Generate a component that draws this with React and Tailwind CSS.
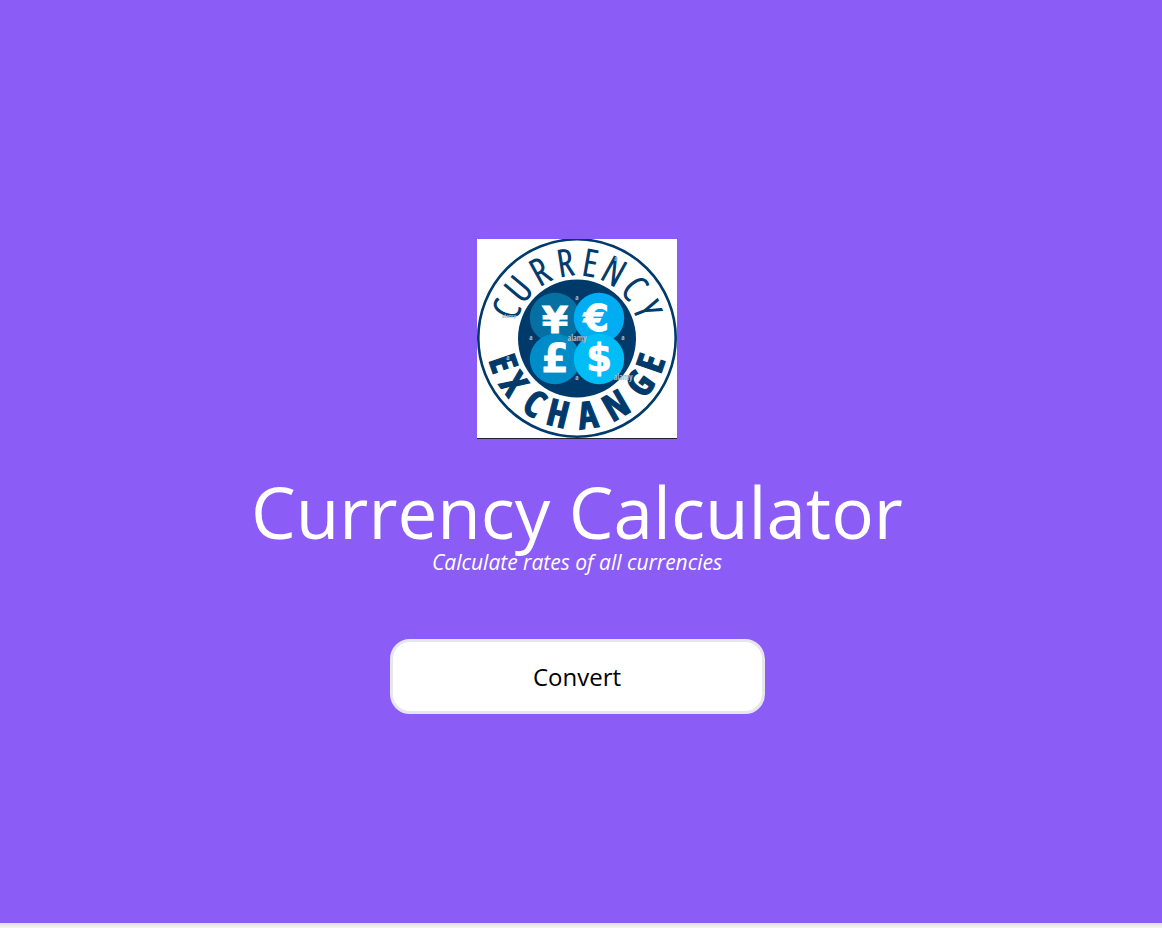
const NAVY = "#003a6b";

const topLetters = [
  ["C", -68], ["U", -50], ["R", -29], ["R", -9],
  ["E", 10], ["N", 29], ["C", 49], ["Y", 68],
];

const bottomLetters = [
  ["E", 71], ["X", 54], ["C", 33], ["H", 14],
  ["A", -8], ["N", -30], ["G", -54], ["E", -71],
];

const coins = [
  { sign: "¥", x: 78, y: 79, fill: "#0670a3", tx: 78, ty: 94, size: 38 },
  { sign: "€", x: 122, y: 79, fill: "#00adf2", tx: 119, ty: 92, size: 37 },
  { sign: "£", x: 78, y: 120, fill: "#008bc9", tx: 78, ty: 133, size: 39 },
  { sign: "$", x: 122, y: 120, fill: "#00bdf6", tx: 122, ty: 132, size: 37 },
];

const marks = [[100, 61], [54, 101], [146, 101], [100, 141], [31, 121], [139, 22]];

function Logo() {
  return (
    <svg viewBox="0 0 200 200" className="size-[200px] bg-white" role="img" aria-label="Currency Exchange">
      <circle cx="100" cy="99" r="98.7" fill="none" stroke={NAVY} strokeWidth="2.6" />
      <circle cx="100" cy="99.5" r="59" fill={NAVY} />
      {coins.map((c) => (
        <circle key={c.sign} cx={c.x} cy={c.y} r="25.2" fill={c.fill} />
      ))}
      <g fill="#fff" textAnchor="middle" fontWeight="700" className="font-['DejaVu_Sans',sans-serif]">
        {coins.map((c) => (
          <text key={c.sign} x={c.tx} y={c.ty} fontSize={c.size} stroke="#fff" strokeWidth="0.8">{c.sign}</text>
        ))}
      </g>
      <g fill={NAVY} textAnchor="middle" fontSize="37">
        <g fontWeight="300" className="font-['Open_Sans_Condensed_Light','Open_Sans_Condensed','Liberation_Sans_Narrow',sans-serif]">
          {topLetters.map(([l, a], i) => (
            <text key={i} x="100" y="36" stroke={NAVY} strokeWidth="1.2" transform={`rotate(${a} 100 99)`}>{l}</text>
          ))}
        </g>
        <g fontWeight="700" className="font-['Open_Sans_Condensed','Liberation_Sans_Narrow',sans-serif]">
          {bottomLetters.map(([l, a], i) => (
            <text key={i} x="100" y="190" stroke={NAVY} strokeWidth="1.2" transform={`rotate(${a} 100 99)`}>{l}</text>
          ))}
        </g>
      </g>
      <g fill="#a9bccd" textAnchor="middle" className="font-['Open_Sans_Condensed','Liberation_Sans_Narrow',sans-serif]">
        {marks.map(([x, y], i) => (
          <text key={i} x={x} y={y} fontSize="7" fontWeight="700">a</text>
        ))}
        <text x="100" y="102" fontSize="8" fontWeight="700">alamy</text>
        <text x="146" y="141" fontSize="8" fontWeight="700">alamy</text>
        <text x="32" y="79" fontSize="6" fontWeight="700">alamy</text>
      </g>
      <rect x="0" y="199" width="200" height="1" fill="#1c2733" />
    </svg>
  );
}

export default function App() {
  return (
    <div className="flex min-h-screen flex-col font-['Open_Sans',sans-serif]">
      <main className="flex flex-1 flex-col items-center justify-center bg-[#8b5cf6] pt-[30px] pr-2 text-white">
        <Logo />
        <h1 className="mt-[34px] text-center text-[71px] leading-[77px]">Currency Calculator</h1>
        <p className="text-center text-[21px] leading-6 italic">Calculate rates of all currencies</p>
        <button
          type="button"
          className="mt-[65px] h-[75px] w-full max-w-[375px] rounded-[20px] border-[3px] border-gray-200 bg-white text-2xl text-black"
        >
          Convert
        </button>
      </main>
      <footer className="h-[5px] bg-linear-to-b from-[#dedede] to-[#f5f5f5]" />
    </div>
  );
}
